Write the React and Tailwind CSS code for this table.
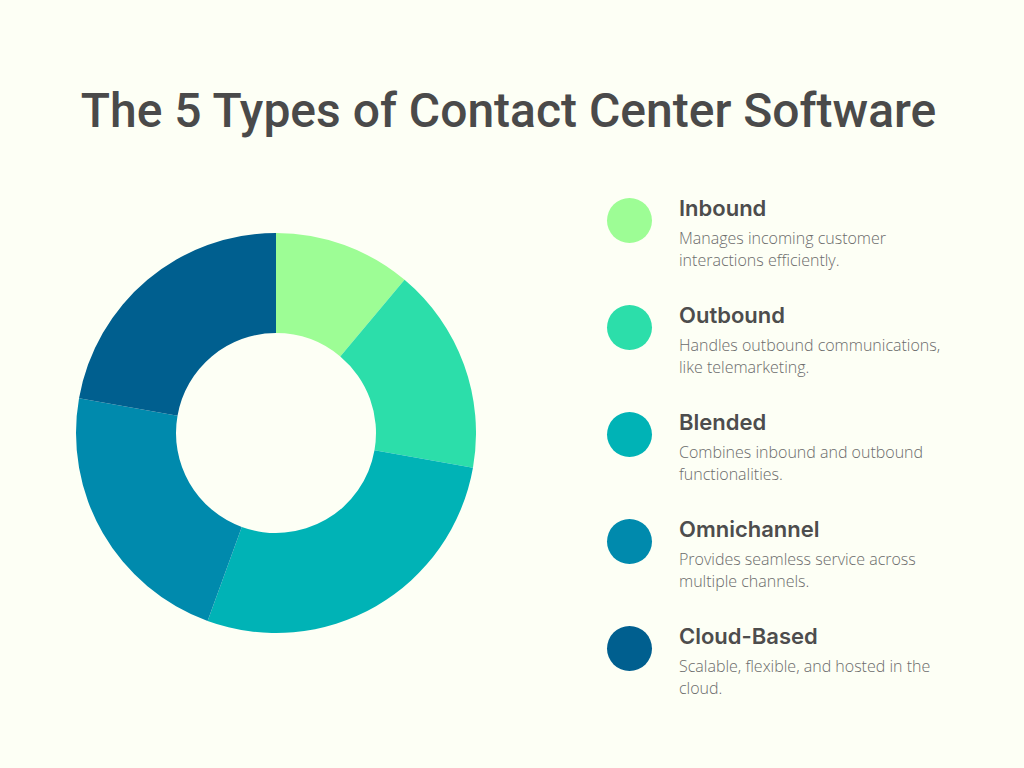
const segments = [
  { name: "Inbound", color: "#9dfd95", from: 0, to: 40, text: "Manages incoming customer interactions efficiently." },
  { name: "Outbound", color: "#2cdeaa", from: 40, to: 100, text: "Handles outbound communications, like telemarketing." },
  { name: "Blended", color: "#00b3b6", from: 100, to: 200, text: "Combines inbound and outbound functionalities." },
  { name: "Omnichannel", color: "#008aad", from: 200, to: 280, text: "Provides seamless service across multiple channels." },
  { name: "Cloud-Based", color: "#005f8f", from: 280, to: 360, text: "Scalable, flexible, and hosted in the cloud." },
];

// angle measured clockwise from 12 o'clock
function point(cx, cy, r, deg) {
  const a = ((deg - 90) * Math.PI) / 180;
  return [cx + r * Math.cos(a), cy + r * Math.sin(a)];
}

function arcPath(from, to, outer = 200, inner = 100) {
  const [x1, y1] = point(200, 200, outer, from);
  const [x2, y2] = point(200, 200, outer, to);
  const [x3, y3] = point(200, 200, inner, to);
  const [x4, y4] = point(200, 200, inner, from);
  const large = to - from > 180 ? 1 : 0;
  return `M${x1} ${y1} A${outer} ${outer} 0 ${large} 1 ${x2} ${y2} L${x3} ${y3} A${inner} ${inner} 0 ${large} 0 ${x4} ${y4} Z`;
}

function Donut() {
  return (
    <svg width="400" height="400" viewBox="0 0 400 400" className="mt-[39px] shrink-0">
      {segments.map((s) => (
        <path key={s.name} d={arcPath(s.from, s.to)} fill={s.color} />
      ))}
    </svg>
  );
}

export default function App() {
  return (
    <div className="w-[1024px] h-[768px] bg-[#fdfff5] overflow-hidden">
      <h1
        className="pt-[87px] text-center text-[48px] leading-[48px] font-medium text-[#4a4a4a] pr-[7px]"
        style={{ fontFamily: "Roboto, Arial, sans-serif" }}
      >
        The 5 Types of Contact Center Software
      </h1>

      <div className="flex items-start pl-[76px] mt-[59px]">
        <Donut />

        <ul className="ml-[131px] flex flex-col gap-[30px]">
          {segments.map((s) => (
            <li key={s.name} className="flex items-start gap-[27px]">
              <span
                className="mt-1 w-[45px] h-[45px] rounded-full shrink-0"
                style={{ backgroundColor: s.color }}
              />
              <div className="w-[275px]">
                <h3
                  className="text-[22px] leading-[28px] font-semibold text-[#4d4d4d]"
                  style={{ fontFamily: "Inter, sans-serif" }}
                >
                  {s.name}
                </h3>
                <p
                  className="mt-[5px] text-[16px] leading-[22px] font-light text-[#6b6b6b]"
                  style={{ fontFamily: '"Open Sans", sans-serif' }}
                >
                  {s.text}
                </p>
              </div>
            </li>
          ))}
        </ul>
      </div>
    </div>
  );
}
